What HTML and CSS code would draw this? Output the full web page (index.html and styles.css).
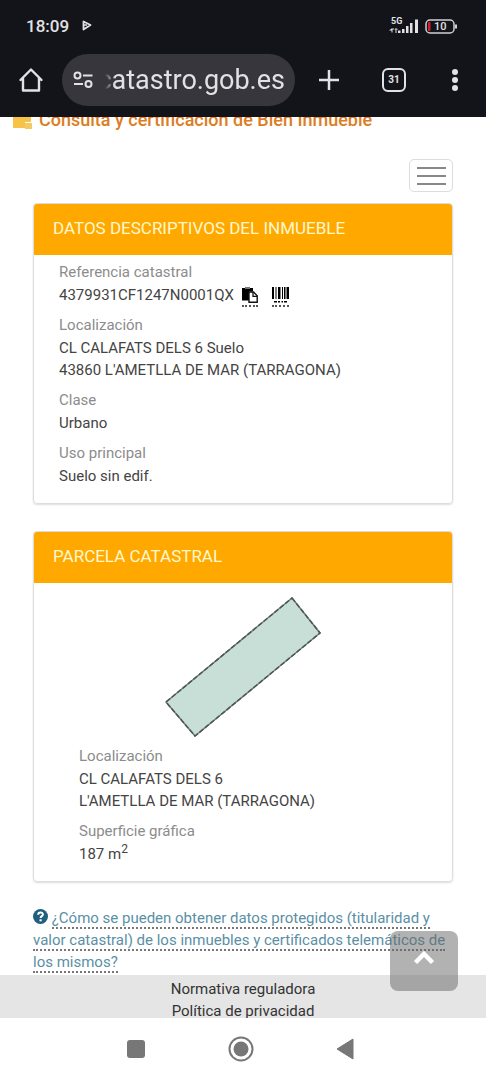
FILE: index.html
```html
<!DOCTYPE html>
<html lang="es">
<head>
<meta charset="utf-8">
<meta name="viewport" content="width=device-width, initial-scale=1">
<title>Sede Electrónica del Catastro</title>
<link rel="stylesheet" href="styles.css">
</head>
<body>
<header class="chrome">
  <div class="status">
    <div class="status-left">
      <span class="clock">18:09</span>
      <svg width="10" height="12" viewBox="0 0 10 12" aria-hidden="true"><path d="M1.500 1.500L8.500 5L1.500 9.500Z" fill="none" stroke="#e2e2e6" stroke-width="1.800" stroke-linejoin="round"/><path d="M2 5h3" stroke="#e2e2e6" stroke-width="1.500"/></svg>
    </div>
    <div class="status-right">
      <div class="signal">
        <span class="network">5G</span>
        <svg width="30" height="16" viewBox="0 0 30 16" fill="#e2e2e6" aria-hidden="true"><path d="M2.500 10.500L5 10.500V11.500H3.500V14.500H2.500V12.500H0ZM6 10.500H8L9 11.500H7.500V15H6.500V11.500H5.500Z"/><rect x="9" y="12.500" width="2.500" height="2.500"/><rect x="13" y="11" width="2.500" height="4"/><rect x="17" y="8" width="2.500" height="7"/><rect x="21" y="5" width="2.500" height="10"/><rect x="26" y="1.500" width="3" height="13.500"/></svg>
      </div>
      <div class="battery">
        <svg width="33" height="15" viewBox="0 0 33 15" aria-hidden="true"><rect x="1" y="1" width="28" height="13" rx="4" fill="none" stroke="#d0d0d4" stroke-width="1.500"/><rect x="3" y="3" width="2.500" height="9" rx="1" fill="#d91c2b"/><path d="M31 5.500v4" stroke="#d0d0d4" stroke-width="2"/></svg>
        <span class="battery-level">10</span>
      </div>
    </div>
  </div>
  <div class="toolbar">
    <button class="tool home" aria-label="Inicio"><svg width="26" height="26" viewBox="0 0 26 26" fill="none" stroke="#e2e2e6" stroke-width="2.400" stroke-linejoin="round" stroke-linecap="round"><path d="M2.500 13L13 2.500L23.500 13M5 10.500V23.500H21V10.500"/></svg></button>
    <button class="address">
      <svg width="20" height="18" viewBox="0 0 20 18" fill="none" stroke="#e2e2e6" stroke-width="2" aria-hidden="true"><circle cx="4.500" cy="4.500" r="3"/><path d="M10 4.500H19.500M1 13H10"/><circle cx="15.500" cy="13" r="3"/></svg>
      <span class="url">catastro.gob.es</span>
    </button>
    <button class="tool plus" aria-label="Nueva pestaña"><svg width="22" height="22" viewBox="0 0 22 22" stroke="#e2e2e6" stroke-width="2.500"><path d="M11 1V21M1 11H21"/></svg></button>
    <button class="tool tabs" aria-label="31 pestañas"><span class="tab-count">31</span></button>
    <button class="tool more" aria-label="Más opciones"><svg width="8" height="22" viewBox="0 0 8 22" fill="#e2e2e6"><circle cx="4" cy="3" r="3"/><circle cx="4" cy="11" r="3"/><circle cx="4" cy="19" r="3"/></svg></button>
  </div>
</header>

<main class="page">
  <h1 class="page-title">
    <svg width="20" height="20" viewBox="0 0 20 20" aria-hidden="true"><path fill="#f6c248" d="M0 0H18V12H12V18H0Z"/><rect x="12" y="13" width="7" height="6" fill="#f6c860"/></svg>
    Consulta y certificación de Bien Inmueble
  </h1>
  <div class="content">
    <button class="menu-button" aria-label="Menú"><span></span><span></span><span></span></button>

    <section class="card">
      <h2 class="card-title">DATOS DESCRIPTIVOS DEL INMUEBLE</h2>
      <dl class="details">
        <dt>Referencia catastral</dt>
        <dd class="reference">4379931CF1247N0001QX
          <a class="ref-link" href="#" aria-label="Copiar referencia"><svg width="16" height="16" viewBox="0 0 16 16"><path d="M0 1H11V4.500H7V13.500H0Z"/><rect x="3" y="0" width="5" height="2" fill="#777"/><path d="M7 5H11.500L15.200 8.700V15.200H7Z" fill="#fff" stroke="#111" stroke-width="1.400"/><path d="M11 5V9.300H15.200" fill="none" stroke="#111" stroke-width="1.300"/></svg></a>
          <a class="ref-link" href="#" aria-label="Código de barras"><svg width="17" height="16" viewBox="0 0 17 16"><path d="M0 0H2V12H0ZM3.500 0H4.500V12H3.500ZM6 0H8.500V12H6ZM10 0H11V12H10ZM12 0H13.500V12H12ZM14.500 0H17V12H14.500ZM2 14H5V15.500H2ZM6 14H8V15.500H6ZM9.500 14H11V15.500H9.500ZM12 14H15V15.500H12Z"/></svg></a>
        </dd>
        <dt>Localización</dt>
        <dd>CL CALAFATS DELS 6 Suelo<br>43860 L'AMETLLA DE MAR (TARRAGONA)</dd>
        <dt>Clase</dt>
        <dd>Urbano</dd>
        <dt>Uso principal</dt>
        <dd>Suelo sin edif.</dd>
      </dl>
    </section>

    <section class="card">
      <h2 class="card-title">PARCELA CATASTRAL</h2>
      <svg class="parcel" width="160" height="144" viewBox="0 0 160 144" role="img" aria-label="Croquis de la parcela"><path d="M129 3L157 38L32 141L3 107Z" fill="#c7dfd7" stroke="#6f7c78" stroke-width="1.500"/><path d="M129 3L157 38L32 141L3 107Z" fill="none" stroke="#4c5754" stroke-width="1.500" stroke-dasharray="5 2"/></svg>
      <dl class="details inset">
        <dt>Localización</dt>
        <dd>CL CALAFATS DELS 6<br>L'AMETLLA DE MAR (TARRAGONA)</dd>
        <dt>Superficie gráfica</dt>
        <dd>187 m<sup>2</sup></dd>
      </dl>
    </section>

    <p class="help"><svg class="help-icon" width="15" height="15" viewBox="0 0 15 15" aria-hidden="true"><circle cx="7.500" cy="7.500" r="7.500" fill="#205f80"/><path d="M5.200 5.800C5.200 2.800 9.900 2.900 9.900 5.400C9.900 7.200 7.600 7 7.600 8.900" fill="none" stroke="#fff" stroke-width="2"/><rect x="6.500" y="10.300" width="2.200" height="2" fill="#fff"/></svg> <a href="#">¿Cómo se pueden obtener datos protegidos (titularidad y valor catastral) de los inmuebles y certificados telemáticos de los mismos?</a></p>
  </div>
  <footer class="legal">
    <a href="#">Normativa reguladora</a>
    <a href="#">Política de privacidad</a>
  </footer>
  <button class="to-top" aria-label="Volver arriba"><svg width="22" height="16" viewBox="0 0 22 16" fill="none" stroke="#fff" stroke-width="4.500"><path d="M2.500 12.500L11 4L19.500 12.500"/></svg></button>
</main>

<nav class="system-nav" aria-label="Navegación del sistema">
  <button class="tool" aria-label="Recientes"><svg width="20" height="20" viewBox="0 0 20 20"><rect x="1" y="1" width="18" height="18" rx="3" fill="#777"/></svg></button>
  <button class="tool" aria-label="Inicio del sistema"><svg width="26" height="26" viewBox="0 0 26 26"><circle cx="13" cy="13" r="11.500" fill="none" stroke="#777" stroke-width="2"/><circle cx="13" cy="13" r="7.500" fill="#777"/></svg></button>
  <button class="tool" aria-label="Atrás"><svg width="18" height="22" viewBox="0 0 18 22"><path d="M17 1V21L1 11Z" fill="#777" stroke="#777" stroke-linejoin="round"/></svg></button>
</nav>
</body>
</html>
```
FILE: styles.css
```css
* { box-sizing: border-box; }
body {
  margin: 0;
  height: 100vh;
  display: flex;
  flex-direction: column;
  background: #fff;
  color: #444;
  font: 400 15px/22px Roboto, "Liberation Sans", sans-serif;
}
button { border: 0; padding: 0; background: none; color: inherit; font: inherit; }
svg { display: block; flex: none; }
h1, h2, dl, dd, p { margin: 0; }

.chrome { flex: none; background: #131419; color: #e2e2e6; padding: 14px 28px 11px 26px; }
.status { display: flex; justify-content: space-between; align-items: center; height: 24px; }
.status-left, .status-right { display: flex; align-items: center; gap: 6px; }
.status-left { gap: 13px; }
.clock { font-size: 17px; font-weight: 500; }
.signal { position: relative; }
.network { position: absolute; top: -2px; left: 2px; font-size: 9px; line-height: 10px; font-weight: 700; }
.battery { position: relative; }
.battery-level { position: absolute; top: 0; left: 9px; font-size: 11px; line-height: 15px; font-weight: 500; }

.toolbar { display: flex; align-items: center; margin: 16px 0 0 -8px; }
.tool { display: flex; align-items: center; justify-content: center; }
.address {
  flex: 1;
  min-width: 0;
  height: 52px;
  margin-left: 18px;
  padding: 0 10px 0 11px;
  display: flex;
  align-items: center;
  gap: 12px;
  border-radius: 26px;
  background: #36363c;
}
.url {
  flex: 1;
  min-width: 0;
  display: flex;
  justify-content: flex-end;
  overflow: hidden;
  font: 400 27px/34px Roboto, sans-serif;
  mask-image: linear-gradient(to right, transparent, #000 10px);
}
.plus { margin-left: 23px; }
.tabs { margin-left: 42px; }
.more { margin: 0 -1px 0 45px; }
.tab-count {
  width: 24px;
  height: 24px;
  border: 2px solid #e2e2e6;
  border-radius: 6px;
  font-size: 10px;
  line-height: 20px;
  font-weight: 700;
}

.page { position: relative; flex: 1; min-height: 0; overflow: hidden; display: flex; flex-direction: column; }
.page-title {
  display: flex;
  align-items: center;
  gap: 6px;
  margin: -8px 0 0 13px;
  color: #dc7d22;
  font-size: 18px;
  line-height: 22px;
  font-weight: 500;
}
.content { padding: 28px 33px 2px; }
.menu-button {
  display: flex;
  flex-direction: column;
  align-items: center;
  justify-content: center;
  gap: 6px;
  width: 44px;
  height: 33px;
  margin: 0 0 11px auto;
  border: 1px solid #ddd;
  border-radius: 5px;
}
.menu-button span { width: 29px; height: 2px; background: #888; }

.card { margin-bottom: 27px; border: 1px solid #ddd; border-radius: 4px; box-shadow: 0 1px 2px #0002; overflow: hidden; }
.card:last-of-type { margin-bottom: 25px; }
.card-title { margin: -1px -1px 0; padding: 14px 20px 16px; background: #ffa800; color: #fff8cf; font-size: 17px; line-height: 22px; font-weight: 400; }
.details { padding: 6px 25px 16px; }
.details.inset { padding: 6px 45px 16px; }
.details dt { color: #8c8c8c; line-height: 23px; }
.details dd + dt { margin-top: 8px; }
.reference { display: flex; align-items: center; }
.ref-link { margin: 2px 0 -2px 8px; padding-bottom: 2px; border-bottom: 2px dotted #555; }
.ref-link + .ref-link { margin-left: 14px; }
sup { font-size: 12px; line-height: 0; }
.parcel { margin: 12px auto 0 129px; }

.help-icon { display: inline-block; vertical-align: -1px; }
.help a { color: #5a90a5; text-decoration: none; border-bottom: 2px dotted #777; }
.legal { display: flex; flex-direction: column; align-items: center; padding-top: 3px; flex: 1; background: #e5e5e5; }
.legal a { color: #333; text-decoration: none; }
.to-top {
  position: absolute;
  right: 28px;
  bottom: 27px;
  display: flex;
  justify-content: center;
  width: 68px;
  height: 60px;
  padding-top: 19px;
  border-radius: 8px;
  background: #66666680;
}
.system-nav { flex: none; height: 62px; padding-right: 6px; display: flex; align-items: center; justify-content: center; gap: 82px; }
```
